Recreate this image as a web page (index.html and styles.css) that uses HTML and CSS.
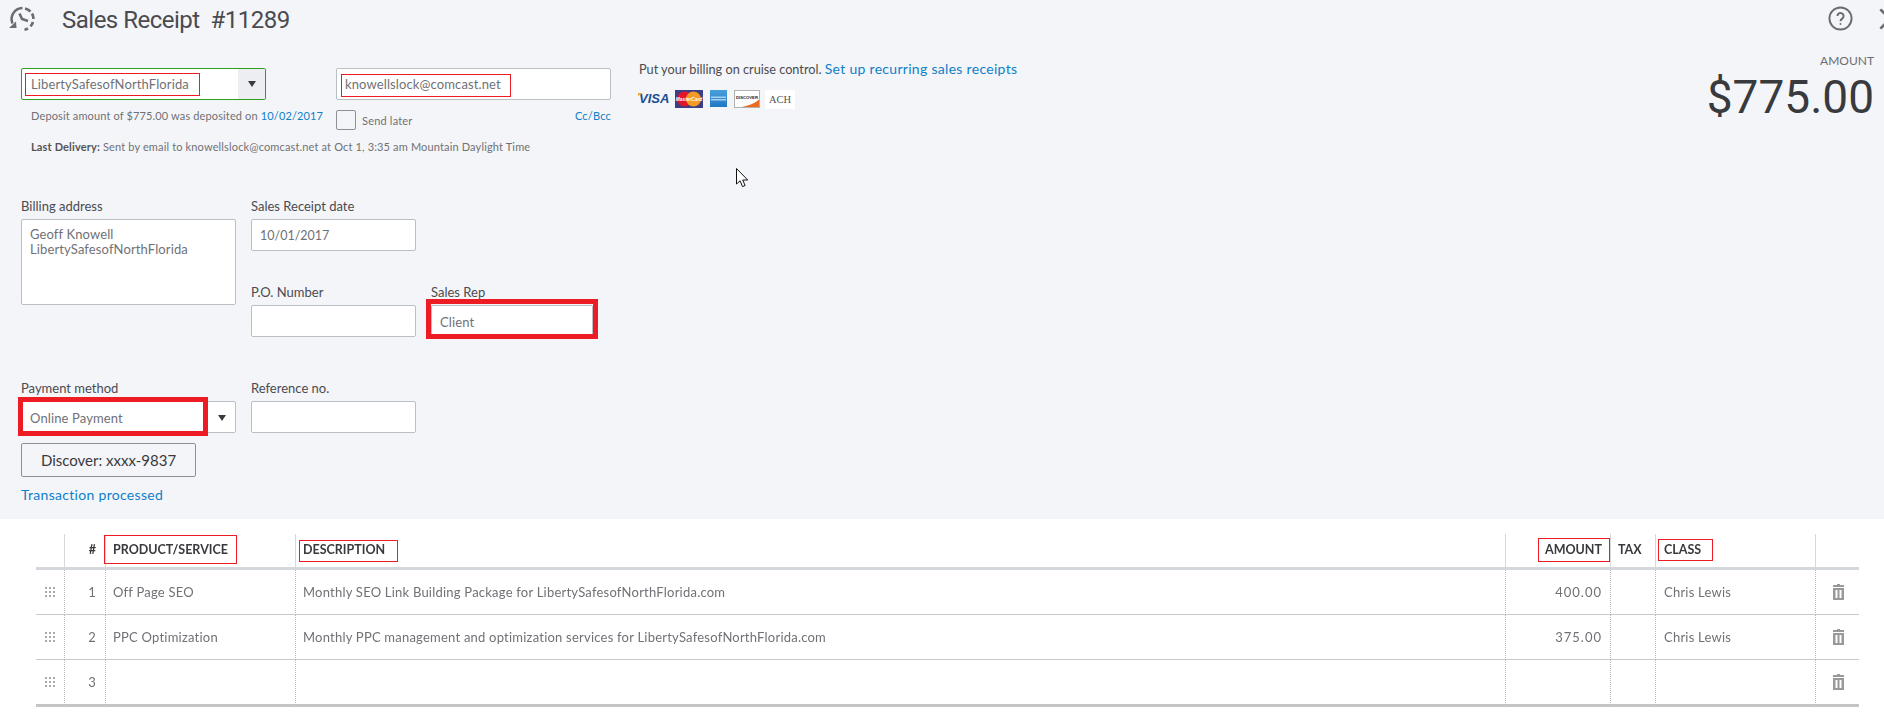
FILE: index.html
```html
<!DOCTYPE html>
<html lang="en">
<head>
<meta charset="utf-8">
<title>Sales Receipt #11289</title>
<link rel="stylesheet" href="styles.css">
</head>
<body>
<div class="page">
  <section class="sheet">
    <header class="head">
      <svg class="history" viewBox="0 0 28 28" fill="none" stroke="#6b6c72" stroke-width="2.6">
        <path d="M4.600 18.500A11 11 0 0 1 14.500 3"/>
        <path d="M17 3.400A11 11 0 0 1 22.500 6.500M24 8.500a11 11 0 0 1 1.400 5.500M25 17a11 11 0 0 1-2.600 4.400M20 23.400a11 11 0 0 1-3.500 1.400"/>
        <path d="M11.500 8.500L14 14l6 2"/>
        <path d="M1 23h7.500l-.5-6.500z" fill="#6b6c72" stroke="none"/>
      </svg>
      <h1 class="title">Sales Receipt&nbsp; #11289</h1>
      <div class="head-tools">
        <svg class="help" viewBox="0 0 26 26" fill="none" stroke="#6b6c72" stroke-width="2">
          <circle cx="13" cy="13" r="11.500"/>
          <path d="M9.800 10.500a3.200 3.200 0 1 1 5 2.600c-1.100.8-1.800 1.300-1.800 2.700"/>
          <circle cx="13" cy="18.800" r="1" fill="#6b6c72" stroke="none"/>
        </svg>
        <svg class="close" viewBox="0 0 24 24" fill="none" stroke="#6b6c72" stroke-width="3">
          <path d="M1.500 1.500l21 21M22.500 1.500l-21 21"/>
        </svg>
      </div>
    </header>

    <div class="summary">
      <div class="summary-left">
        <div class="pick-row">
          <div class="customer">
            <span class="customer-name">LibertySafesofNorthFlorida</span>
            <span class="arrow-panel"><i class="arrow"></i></span>
            <span class="mark mark-customer"></span>
          </div>
          <div class="email">
            <span>knowellslock@comcast.net</span>
            <span class="mark mark-email"></span>
          </div>
        </div>
        <div class="hint-row">
          <p class="deposit">Deposit amount of $775.00 was deposited on <a class="link" href="#">10/02/2017</a></p>
          <div class="send">
            <span class="checkbox"></span>
            <span class="send-label">Send later</span>
            <a class="link cc" href="#">Cc/Bcc</a>
          </div>
        </div>
        <p class="delivery"><b>Last Delivery:</b> Sent by email to knowellslock@comcast.net at Oct 1, 3:35 am Mountain Daylight Time</p>
      </div>

      <div class="promo">
        <p class="promo-line">Put your billing on cruise control. <a class="link promo-link" href="#">Set up recurring sales receipts</a></p>
        <div class="cards">
          <span class="visa">VISA</span>
          <svg class="mc" viewBox="0 0 28 18">
            <rect width="28" height="18" fill="#3b3f86"/>
            <circle cx="9.500" cy="9" r="7.500" fill="#e3152b"/>
            <circle cx="18.500" cy="9" r="7.500" fill="#f59a23"/>
            <text class="mc-text" x="14" y="11" text-anchor="middle">MasterCard</text>
          </svg>
          <svg class="amex" viewBox="0 0 17 17">
            <defs><linearGradient id="amexFill" x1="0" y1="0" x2="0" y2="1"><stop offset="0" stop-color="#4a9fdc"/><stop offset="1" stop-color="#1f78c4"/></linearGradient></defs>
            <rect width="17" height="17" fill="url(#amexFill)"/>
            <rect x="1" y="6.500" width="15" height="1.500" fill="#a9d2ef"/>
            <rect x="1" y="9" width="15" height="1.500" fill="#a9d2ef"/>
          </svg>
          <svg class="discover" viewBox="0 0 26 18">
            <rect x=".5" y=".5" width="25" height="17" fill="#fff" stroke="#b1b1b1"/>
            <path d="M8 17C16 15.500 22 12.500 25 9.500V17z" fill="#ee6a1f"/>
            <text class="disc-text" x="13" y="8.500" text-anchor="middle">DISCOVER</text>
          </svg>
          <span class="ach">ACH</span>
        </div>
      </div>

      <div class="total">
        <p class="total-label">AMOUNT</p>
        <p class="total-value">$775.00</p>
      </div>
    </div>

    <div class="form-grid">
      <div class="field field-address">
        <label class="label">Billing address</label>
        <div class="box box-address">Geoff Knowell<br>LibertySafesofNorthFlorida</div>
      </div>
      <div class="field field-date">
        <label class="label">Sales Receipt date</label>
        <div class="box box-date">10/01/2017</div>
      </div>
      <div class="field field-po">
        <label class="label">P.O. Number</label>
        <div class="box"></div>
      </div>
      <div class="field field-rep">
        <label class="label">Sales Rep</label>
        <div class="box">Client<span class="mark mark-heavy mark-rep"></span></div>
      </div>
    </div>

    <div class="form-grid payment-grid">
      <div class="field">
        <label class="label">Payment method</label>
        <div class="box">Online Payment<i class="arrow arrow-method"></i><span class="mark mark-heavy mark-method"></span></div>
      </div>
      <div class="field">
        <label class="label">Reference no.</label>
        <div class="box"></div>
      </div>
    </div>

    <button class="card-button" type="button">Discover: xxxx-9837</button>
    <a class="link processed" href="#">Transaction processed</a>

    <svg class="cursor" viewBox="0 0 13 20">
      <path d="M.5.500v15.500l3.600-3.200 2.400 5.800 2.600-1.100-2.400-5.500h5z" fill="#fff" stroke="#111" stroke-width="1"/>
    </svg>
  </section>

  <section class="lines">
    <table class="grid">
      <colgroup>
        <col class="c-drag"><col class="c-num"><col class="c-product"><col class="c-desc"><col class="c-amount"><col class="c-tax"><col class="c-class"><col class="c-del">
      </colgroup>
      <thead>
        <tr>
          <th></th>
          <th class="num">#</th>
          <th>PRODUCT/SERVICE<span class="mark mark-product"></span></th>
          <th>DESCRIPTION<span class="mark mark-desc"></span></th>
          <th class="right">AMOUNT<span class="mark mark-amount"></span></th>
          <th>TAX</th>
          <th class="class-cell">CLASS<span class="mark mark-class"></span></th>
          <th></th>
        </tr>
      </thead>
      <tbody>
        <tr>
          <td class="drag"><span class="dots"><i></i><i></i><i></i><i></i><i></i><i></i><i></i><i></i><i></i></span></td>
          <td class="num">1</td>
          <td>Off Page SEO</td>
          <td>Monthly SEO Link Building Package for LibertySafesofNorthFlorida.com</td>
          <td class="right figure">400.00</td>
          <td></td>
          <td class="class-cell">Chris Lewis</td>
          <td class="del"><svg class="trash" viewBox="0 0 11 16"><path d="M4 0h3v1h4v2H0V1h4z" fill="#999"/><path fill-rule="evenodd" d="M0 4h11v12H0zM2.500 6v8h2V6zM6.500 6v8h2V6z" fill="#999"/></svg></td>
        </tr>
        <tr>
          <td class="drag"><span class="dots"><i></i><i></i><i></i><i></i><i></i><i></i><i></i><i></i><i></i></span></td>
          <td class="num">2</td>
          <td>PPC Optimization</td>
          <td>Monthly PPC management and optimization services for LibertySafesofNorthFlorida.com</td>
          <td class="right figure">375.00</td>
          <td></td>
          <td class="class-cell">Chris Lewis</td>
          <td class="del"><svg class="trash" viewBox="0 0 11 16"><path d="M4 0h3v1h4v2H0V1h4z" fill="#999"/><path fill-rule="evenodd" d="M0 4h11v12H0zM2.500 6v8h2V6zM6.500 6v8h2V6z" fill="#999"/></svg></td>
        </tr>
        <tr class="last">
          <td class="drag"><span class="dots"><i></i><i></i><i></i><i></i><i></i><i></i><i></i><i></i><i></i></span></td>
          <td class="num">3</td>
          <td></td>
          <td></td>
          <td></td>
          <td></td>
          <td></td>
          <td class="del"><svg class="trash" viewBox="0 0 11 16"><path d="M4 0h3v1h4v2H0V1h4z" fill="#999"/><path fill-rule="evenodd" d="M0 4h11v12H0zM2.500 6v8h2V6zM6.500 6v8h2V6z" fill="#999"/></svg></td>
        </tr>
      </tbody>
    </table>
  </section>
</div>
</body>
</html>
```
FILE: styles.css
```css
* { box-sizing: border-box; }
html, body { margin: 0; padding: 0; background: #fff; }
body { font-family: "Lato", "Liberation Sans", sans-serif; color: #393a3d; }
p, h1 { margin: 0; }
.page { width: 1884px; height: 714px; overflow: hidden; filter: blur(0.35px); }

.sheet { position: relative; height: 519px; background: #f4f5f8; padding-left: 21px; }
.link { color: #0f7fc9; text-decoration: none; }

.head { height: 40px; margin-left: -21px; display: flex; align-items: flex-start; position: relative; }
.history { width: 28px; height: 28px; margin: 5px 0 0 8px; }
.title { font: 400 24px/40px "Roboto", sans-serif; color: #4a4b50; margin-left: 26px; letter-spacing: -0.5px; }
.head-tools { margin-left: auto; display: flex; padding-top: 7px; }
.help { width: 25px; height: 25px; margin-right: 26px; margin-top: -1px; }
.close { width: 22px; height: 22px; margin-right: -17px; margin-top: 1px; }

.summary { display: flex; padding-top: 14px; }
.summary-left { width: 590px; padding-top: 14px; flex: none; }
.pick-row { display: flex; gap: 70px; }
.customer, .email { position: relative; height: 32px; background: #fff; font-size: 13px; letter-spacing: 0.12px; color: #707176; display: flex; align-items: center; border-radius: 2px; }
.customer { width: 245px; border: 1px solid #2ca01c; padding-left: 9px; }
.customer-name { flex: 1; }
.arrow-panel { width: 27px; height: 30px; background: #eceef1; display: flex; align-items: center; justify-content: center; }
.arrow { display: block; width: 0; height: 0; border-left: 4px solid transparent; border-right: 4px solid transparent; border-top: 6px solid #393a3d; }
.email { width: 275px; border: 1px solid #babec5; padding-left: 8px; }

.mark { position: absolute; border: 1px solid #ed1c24; pointer-events: none; }
.mark-heavy { border-width: 5px; }
.mark-customer { left: 3px; top: 4px; width: 175px; height: 23px; }
.mark-email { left: 4px; top: 5px; width: 170px; height: 23px; }
.mark-rep { left: -6px; top: -7px; width: 172px; height: 40px; }
.mark-method { left: -4px; top: -5px; width: 190px; height: 39px; }

.hint-row { display: flex; height: 20px; margin-top: 10px; }
.deposit { width: 315px; padding-left: 10px; font-size: 11px; letter-spacing: 0.14px; line-height: 14px; margin-top: -1px; color: #707176; }
.send { width: 275px; display: flex; align-items: center; font-size: 11px; letter-spacing: 0.2px; color: #707176; }
.checkbox { width: 20px; height: 20px; border: 1px solid #8d9096; border-radius: 2px; background: #f4f5f8; }
.send-label { margin-left: 6px; }
.cc { margin-left: auto; align-self: flex-start; line-height: 12px; }
.delivery { margin-top: 10px; padding-left: 10px; font-size: 11px; letter-spacing: 0.15px; line-height: 14px; color: #707176; white-space: nowrap; }
.delivery b { color: #555; }

.promo { margin-left: 28px; padding-top: 6px; flex: none; }
.promo-line { font-size: 12.700px; line-height: 18px; color: #4a4b50; white-space: nowrap; }
.promo-link { font-size: 14px; letter-spacing: 0.3px; }
.cards { display: flex; align-items: flex-start; margin-top: 12px; }
.visa { position: relative; width: 36px; font: italic 700 13px/18px "Liberation Sans", sans-serif; color: #1a4f95; }
.visa::before { content: ""; position: absolute; left: -1px; top: 3px; border-top: 3px solid #f2a93b; border-right: 5px solid transparent; }
.mc { width: 28px; height: 18px; }
.mc-text { font: italic 700 4.800px "Liberation Sans", sans-serif; fill: #fff; }
.amex { width: 17px; height: 17px; margin-left: 7px; }
.discover { width: 26px; height: 18px; margin-left: 7px; }
.disc-text { font: 700 4.200px "Liberation Sans", sans-serif; fill: #222; }
.ach { width: 30px; height: 19px; margin-left: 5px; background: #fff; font: 400 10.500px/19px "Liberation Serif", serif; color: #555; text-align: center; }

.total { margin-left: auto; padding-right: 10px; text-align: right; }
.total-label { font-size: 12px; line-height: 14px; color: #6b6c72; }
.total-value { font: 400 46px/46px "Roboto", sans-serif; color: #393a3d; margin-top: 6px; }

.form-grid { display: grid; grid-template-columns: 215px 165px 162px; column-gap: 15px; margin-top: 45px; }
.field-address { grid-column: 1; grid-row: 1 / 3; }
.field-date { grid-column: 2; grid-row: 1; }
.field-po { grid-column: 2; grid-row: 2; margin-top: 34px; }
.field-rep { grid-column: 3; grid-row: 2; margin-top: 34px; }
.label { display: block; height: 14px; font-size: 13px; line-height: 14px; margin-bottom: 6px; color: #4a4b50; }
.box { position: relative; height: 32px; background: #fff; border: 1px solid #babec5; border-radius: 2px; padding-left: 8px; font-size: 13px; letter-spacing: 0.12px; line-height: 32px; color: #707176; }
.box-date { font-size: 12.500px; letter-spacing: 0; }
.box-address { height: 86px; line-height: 15.400px; padding-top: 7px; }
.payment-grid { margin-top: 44px; }
.arrow-method { position: absolute; left: 196px; top: 13px; }

.card-button { display: block; width: 175px; height: 34px; margin-top: 10px; background: #f4f5f8; border: 1px solid #8d9096; border-radius: 2px; font: 400 15px "Lato", sans-serif; color: #393a3d; }
.processed { display: block; margin-top: 9px; width: 160px; font-size: 14px; letter-spacing: 0.3px; line-height: 18px; }
.cursor { position: absolute; left: 736px; top: 168px; width: 13px; height: 20px; }

.lines { padding: 15px 0 0 36px; }
.grid { width: 1823px; table-layout: fixed; border-collapse: separate; border-spacing: 0; font-size: 13px; letter-spacing: 0.22px; color: #707176; }
.c-drag { width: 28px; } .c-num { width: 41px; } .c-product { width: 190px; } .c-desc { width: 1210px; }
.c-amount { width: 105px; } .c-tax { width: 45px; } .c-class { width: 160px; } .c-del { width: 44px; }
.grid th { position: relative; height: 36px; padding: 0 8px 3px 7px; border-bottom: 3px solid #d4d7dc; border-left: 1px solid #d4d7dc; font-size: 12.500px; letter-spacing: 0; font-weight: 700; color: #393a3d; text-align: left; white-space: nowrap; }
.grid th:first-child, .grid td:first-child { border-left: 0; }
.grid td { height: 45px; padding: 0 8px 1px 7px; border-bottom: 1px solid #c8c9cc; border-left: 1px dotted #b5b7bb; white-space: nowrap; }
.grid .last td { height: 47px; border-bottom: 3px solid #c4c5c7; }
.grid .num { text-align: right; padding-right: 9px; }
.grid .right { text-align: right; }
.grid .class-cell { padding-left: 8px; }
.grid .figure { letter-spacing: 1px; padding-right: 8px; }
.grid .drag { padding: 0 0 0 9px; }
.dots { display: grid; grid-template-columns: repeat(3, 2px); grid-auto-rows: 2px; gap: 2px; width: 10px; }
.dots i { background: #a8a9ad; display: block; }
.grid .del { padding: 0 0 0 17px; }
.trash { display: block; width: 11px; height: 16px; }

.mark-product { left: -2px; top: 1px; width: 133px; height: 29px; }
.mark-desc { left: 3px; top: 6px; width: 99px; height: 22px; }
.mark-amount { left: 32px; top: 4px; width: 72px; height: 24px; }
.mark-class { left: 2px; top: 5px; width: 55px; height: 22px; }
```
